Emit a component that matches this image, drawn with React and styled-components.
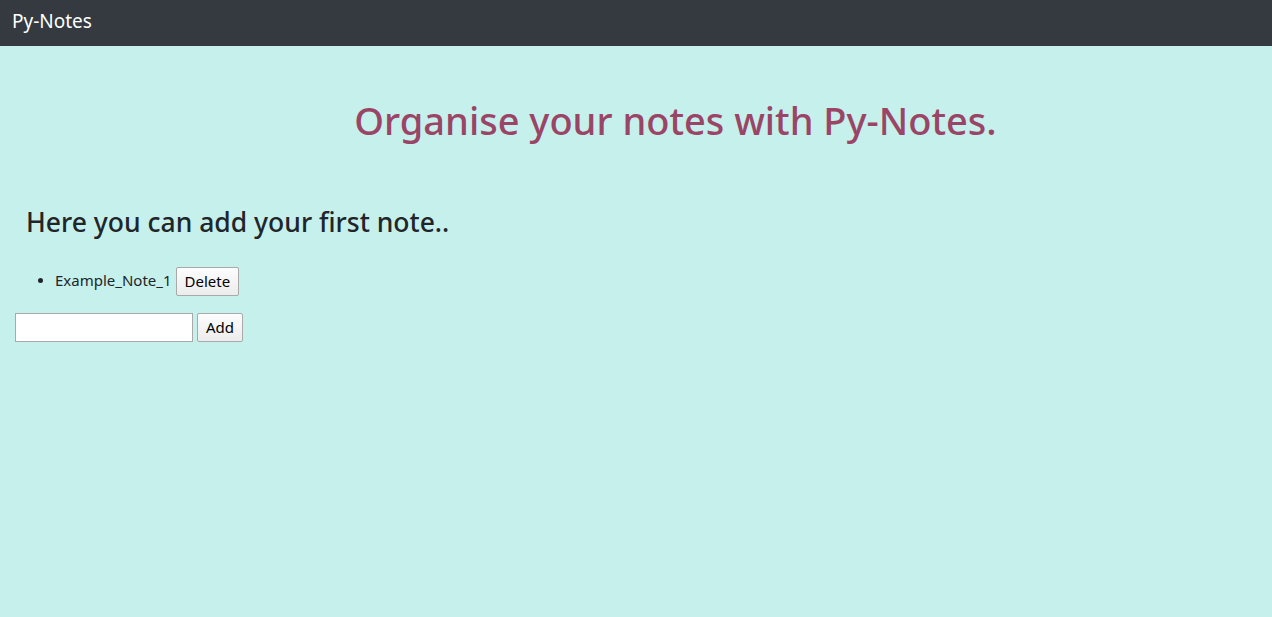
import React, { useState } from 'react'
import styled, { createGlobalStyle } from 'styled-components'

const GlobalStyle = createGlobalStyle`
  html, body {
    margin: 0;
    padding: 0;
    background: #c6f0ec;
    font-family: 'Noto Sans', 'Open Sans', sans-serif;
    color: #212529;
  }
`

export default function App() {
  const [notes, setNotes] = useState(['Example_Note_1'])
  const [text, setText] = useState('')

  const addNote = (e) => {
    e.preventDefault()
    if (!text.trim()) return
    setNotes([...notes, text])
    setText('')
  }

  return (
    <Page>
      <GlobalStyle />
      <NavBar>
        <Brand>Py-Notes</Brand>
      </NavBar>
      <Main>
        <Title>Organise your notes with Py-Notes.</Title>
        <Section>
          <SubTitle>Here you can add your first note..</SubTitle>
          <NoteList>
            {notes.map((n, i) => (
              <NoteItem key={i}>
                <NoteText>{n}</NoteText>
                <PlainButton
                  onClick={() => setNotes(notes.filter((_, j) => j !== i))}
                >
                  Delete
                </PlainButton>
              </NoteItem>
            ))}
          </NoteList>
          <AddForm onSubmit={addNote}>
            <NoteInput value={text} onChange={(e) => setText(e.target.value)} />
            <PlainButton type="submit">Add</PlainButton>
          </AddForm>
        </Section>
      </Main>
    </Page>
  )
}

const Page = styled.div`
  min-height: 617px;
  background: #c6f0ec;
`

const NavBar = styled.nav`
  height: 46px;
  background: #343a40;
  display: flex;
  align-items: center;
  padding: 0 12px;
`

const Brand = styled.span`
  color: #fff;
  font-size: 19px;
  line-height: 1;
  padding-bottom: 3px;
`

const Main = styled.main`
  padding: 0 15px;
`

const Title = styled.h1`
  margin: 52px 0 0 79px;
  text-align: center;
  font-size: 38px;
  font-weight: 500;
  color: #9b4566;
  line-height: 1.2;
`

const Section = styled.section``

const SubTitle = styled.h3`
  margin: 63px 0 0 11px;
  font-size: 26.5px;
  font-weight: 500;
  line-height: 1.2;
`

const NoteList = styled.ul`
  margin: 27px 0 0;
  padding-left: 40px;
`

const NoteItem = styled.li`
  font-size: 15px;
  line-height: 29px;
`

const NoteText = styled.span`
  vertical-align: middle;
`

const PlainButton = styled.button`
  font-family: 'Noto Sans', 'Open Sans', sans-serif;
  font-size: 15px;
  height: 29px;
  padding: 0 8px;
  margin-left: 4px;
  border: 1px solid #a9a9a9;
  border-radius: 2px;
  background: linear-gradient(#fdfdfd, #ececec);
  color: #000;
  vertical-align: middle;
`

const AddForm = styled.form`
  margin-top: 17px;
  display: flex;
  align-items: center;
`

const NoteInput = styled.input`
  width: 178px;
  height: 29px;
  box-sizing: border-box;
  border: 1px solid #a9a9a9;
  background: #fff;
  margin: 0;
  & + button {
    margin-left: 4px;
  }
`
